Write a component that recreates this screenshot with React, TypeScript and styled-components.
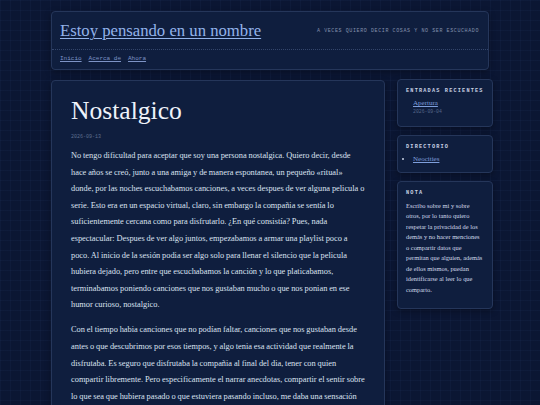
import React from 'react';
import styled, { createGlobalStyle } from 'styled-components';

const serif = `'Liberation Serif', 'DejaVu Serif', serif`;
const mono = `'Liberation Mono', 'DejaVu Sans Mono', monospace`;

const GlobalStyle = createGlobalStyle`
  html, body {
    margin: 0;
    padding: 0;
    background-color: #0b1633;
    background-image:
      linear-gradient(rgba(70, 100, 160, 0.07) 1px, transparent 1px),
      linear-gradient(90deg, rgba(70, 100, 160, 0.07) 1px, transparent 1px);
    background-size: 10px 10px;
    color: #d4dcec;
    font-family: ${serif};
  }
`;

const Page = styled.div`
  width: 438px;
  margin: 0 auto;
  padding-top: 11px;
  display: flex;
  flex-direction: column;
  gap: 10px;
`;

const Card = styled.div`
  background: #0f1e3e;
  border: 1px solid #25365a;
  border-radius: 4px;
  box-shadow: 0 2px 6px rgba(0, 0, 0, 0.35);
`;

const Header = styled(Card)`
  display: flex;
  flex-direction: column;
`;

const HeaderTop = styled.div`
  display: flex;
  align-items: center;
  justify-content: space-between;
  padding: 8px 9px 7px 8px;
  border-bottom: 1px dotted #34466c;
`;

const SiteTitle = styled.a`
  font-family: ${serif};
  font-size: 16.7px;
  color: #93b3ea;
  text-decoration: underline;
  text-decoration-thickness: 1px;
  text-underline-offset: 2px;
  line-height: 22px;
`;

const Tagline = styled.span`
  font-family: ${mono};
  font-size: 5px;
  letter-spacing: 0.6px;
  text-transform: uppercase;
  color: #8391ad;
`;

const Nav = styled.nav`
  display: flex;
  gap: 7px;
  padding: 5px 9px 7px 8px;
`;

const NavLink = styled.a`
  font-family: ${mono};
  font-size: 6px;
  color: #7e94c6;
  text-decoration: underline;
`;

const Columns = styled.div`
  display: flex;
  gap: 12px;
  align-items: flex-start;
`;

const Main = styled(Card)`
  flex: 0 0 334px;
  box-sizing: border-box;
  padding: 12px 19px 40px 19px;
`;

const PostTitle = styled.h1`
  margin: 0;
  font-family: ${serif};
  font-weight: normal;
  font-size: 25.6px;
  line-height: 36px;
  color: #eef2fa;
`;

const PostDate = styled.div`
  margin-top: 5px;
  font-family: ${mono};
  font-size: 5px;
  color: #5f6f90;
`;

const Paragraph = styled.p`
  margin: 8px 0 0 0;
  font-size: 8.35px;
  line-height: 16.6px;
  word-spacing: -0.23px;
  color: #dbe2f0;
  & + & {
    margin-top: 8.5px;
  }
`;

const Sidebar = styled.aside`
  flex: 0 0 92px;
  margin-top: -1px;
  display: flex;
  flex-direction: column;
  gap: 7.5px;
`;

const Widget = styled(Card)`
  box-sizing: border-box;
  padding: 8px 8px 8.5px 8px;
`;

const WidgetTitle = styled.h3`
  margin: 0 0 5px 0;
  font-family: ${mono};
  font-weight: bold;
  font-size: 5.2px;
  letter-spacing: 1.2px;
  line-height: 6px;
  white-space: nowrap;
  text-transform: uppercase;
  color: #c9d2e4;
`;

const RecentList = styled.ul`
  list-style: none;
  margin: 0;
  padding: 0 0 0 7px;
  font-size: 7px;
  line-height: 9px;
`;

const SideLink = styled.a`
  font-family: ${serif};
  font-size: 7px;
  line-height: 9px;
  color: #7f9fdc;
  text-decoration: underline;
`;

const RecentDate = styled.div`
  margin: 1px 0 3px 0;
  font-family: ${mono};
  font-size: 4.8px;
  line-height: 5.5px;
  color: #56668a;
`;

const BulletList = styled.ul`
  margin: 0;
  padding: 0 0 0 7px;
  list-style: disc outside;
  font-size: 7px;
  line-height: 9px;
  color: #c9d2e4;
`;

const NoteText = styled.p`
  margin: 1px 0 4px 0;
  font-size: 6.4px;
  line-height: 10.5px;
  color: #d3dbeb;
`;

const paragraphs = [
  'No tengo dificultad para aceptar que soy una persona nostalgica. Quiero decir, desde hace años se creó, junto a una amiga y de manera espontanea, un pequeño «ritual» donde, por las noches escuchabamos canciones, a veces despues de ver alguna pelicula o serie. Esto era en un espacio virtual, claro, sin embargo la compañia se sentía lo suficientemente cercana como para disfrutarlo. ¿En qué consistía? Pues, nada espectacular: Despues de ver algo juntos, empezabamos a armar una playlist poco a poco. Al inicio de la sesión podia ser algo solo para llenar el silencio que la pelicula hubiera dejado, pero entre que escuchabamos la canción y lo que platicabamos, terminabamos poniendo canciones que nos gustaban mucho o que nos ponian en ese humor curioso, nostalgico.',
  'Con el tiempo habia canciones que no podían faltar, canciones que nos gustaban desde antes o que descubrimos por esos tiempos, y algo tenia esa actividad que realmente la disfrutaba. Es seguro que disfrutaba la compañia al final del dia, tener con quien compartir libremente. Pero especificamente el narrar anecdotas, compartir el sentir sobre lo que sea que hubiera pasado o que estuviera pasando incluso, me daba una sensación muy agradable. Muchas veces era muy incomodo como se sentia todo despues de esa reunión virtual. Mi amiga lo mencionaba a veces, es una sensación que quizá sea común, como el silencio despues de una reunión agradable con amigos o familia, y cuando ya todos se fueron y queda como ese espacio. Es un algo muy extraño, no es',
];

function App() {
  return (
    <>
      <GlobalStyle />
      <Page>
        <Header>
          <HeaderTop>
            <SiteTitle href="#">Estoy pensando en un nombre</SiteTitle>
            <Tagline>A veces quiero decir cosas y no ser escuchado</Tagline>
          </HeaderTop>
          <Nav>
            <NavLink href="#">Inicio</NavLink>
            <NavLink href="#">Acerca de</NavLink>
            <NavLink href="#">Ahora</NavLink>
          </Nav>
        </Header>

        <Columns>
          <Main>
            <PostTitle>Nostalgico</PostTitle>
            <PostDate>2026-09-13</PostDate>
            {paragraphs.map((text, i) => (
              <Paragraph key={i}>{text}</Paragraph>
            ))}
          </Main>

          <Sidebar>
            <Widget>
              <WidgetTitle>Entradas recientes</WidgetTitle>
              <RecentList>
                <li>
                  <SideLink href="#">Apertura</SideLink>
                  <RecentDate>2026-09-04</RecentDate>
                </li>
              </RecentList>
            </Widget>

            <Widget>
              <WidgetTitle>Directorio</WidgetTitle>
              <BulletList>
                <li>
                  <SideLink href="#">Neocities</SideLink>
                </li>
              </BulletList>
            </Widget>

            <Widget>
              <WidgetTitle>Nota</WidgetTitle>
              <NoteText>
                Escribo sobre mi y sobre otros, por lo tanto quiero respetar la
                privacidad de los demás y no hacer menciones o compartir datos
                que permitan que alguien, además de ellos mismos, puedan
                identificarse al leer lo que comparto.
              </NoteText>
            </Widget>
          </Sidebar>
        </Columns>
      </Page>
    </>
  );
}

export default App;
